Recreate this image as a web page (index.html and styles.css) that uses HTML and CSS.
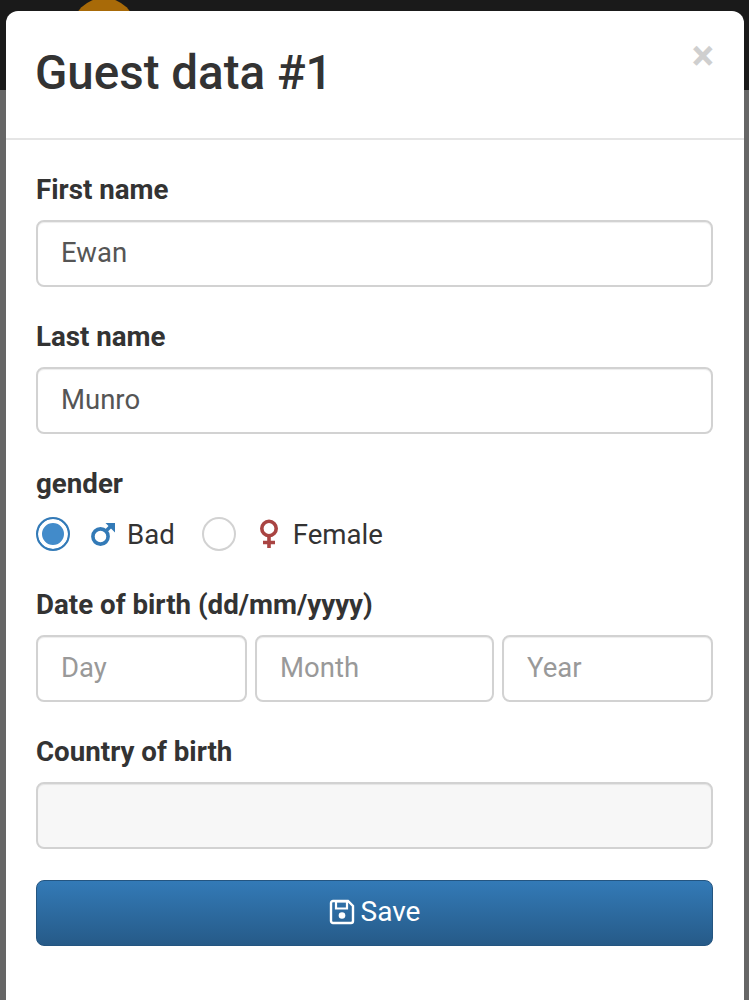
FILE: index.html
```html
<!DOCTYPE html>
<html>
<head>
<meta charset="utf-8" />
<title>Guest data</title>
<link rel="stylesheet" href="styles.css">
</head>
<body>
<div class="top_bar"><div class="top_logo"></div></div>

<div class="modal">
	<div class="modal_head">
		<h1>Guest data #1</h1>
		<span class="modal_close">×</span>
	</div>
	<form class="modal_body">
		<div class="field">
			<label>First name</label>
			<div class="input">Ewan</div>
		</div>
		<div class="field">
			<label>Last name</label>
			<div class="input">Munro</div>
		</div>
		<div class="field field_gender">
			<label>gender</label>
			<div class="gender_row">
				<span class="radio radio_on"></span>
				<svg class="icon_mars" width="26" height="26" viewBox="0 0 26 26"><circle cx="10.5" cy="15.5" r="7.6" fill="none" stroke="#337ab7" stroke-width="3.6"/><path d="M15.5 10.5 L22 4" stroke="#337ab7" stroke-width="3.6" fill="none"/><path d="M15.5 2 H25 V11.5 Z" fill="#337ab7"/></svg>
				<span class="gender_txt">Bad</span>
				<span class="radio"></span>
				<svg class="icon_venus" width="22" height="30" viewBox="0 0 22 30"><circle cx="11" cy="9.5" r="7.2" fill="none" stroke="#a94442" stroke-width="3.6"/><path d="M11 17 V29 M5 23.5 H17" stroke="#a94442" stroke-width="3.6" fill="none"/></svg>
				<span class="gender_txt">Female</span>
			</div>
		</div>
		<div class="field">
			<label>Date of birth (dd/mm/yyyy)</label>
			<div class="date_row">
				<div class="input input_empty">Day</div>
				<div class="input input_empty">Month</div>
				<div class="input input_empty">Year</div>
			</div>
		</div>
		<div class="field">
			<label>Country of birth</label>
			<div class="input input_disabled"></div>
		</div>
		<div class="btn_save">
			<svg width="26" height="26" viewBox="0 0 26 26"><path d="M4 2 H19 L24 7 V22 A2 2 0 0 1 22 24 H4 A2 2 0 0 1 2 22 V4 A2 2 0 0 1 4 2 Z" fill="none" stroke="#fff" stroke-width="2.4"/><path d="M7 2.5 H18 V9.5 H7 Z" fill="none" stroke="#fff" stroke-width="2.2"/><circle cx="13" cy="16.5" r="3.3" fill="#fff"/></svg>
			<span>Save</span>
		</div>
	</form>
</div>
</body>
</html>
```

FILE: styles.css
```css
html,body{
	margin:0;
	height:1000px;
	overflow:hidden;
}
body{
	position:relative;
	background-color:#666;
	font-family:Roboto, "Liberation Sans", sans-serif;
	color:#333;
}
.top_bar{
	position:absolute;
	left:0;
	top:0;
	width:100%;
	height:90px;
	background-color:#1a1a1a;
	overflow:hidden;
}
.top_logo{
	position:absolute;
	left:72px;
	top:-2px;
	width:64px;
	height:64px;
	border-radius:50%;
	background-color:#a86a08;
}
.modal{
	position:relative;
	margin:11px 5px 0 6px;
	height:989px;
	background-color:#fff;
	border-radius:12px 12px 0 0;
}
.modal_head{
	display:flex;
	justify-content:space-between;
	height:127px;
	padding:0 30px 0 29px;
	border-bottom:2px solid #e5e5e5;
}
.modal_head h1{
	margin:32px 0 0 0;
	font-size:47.5px;
	line-height:60px;
	font-weight:500;
}
.modal_close{
	margin:24px 0 0 0;
	font-size:42px;
	line-height:42px;
	font-weight:700;
	color:#cfcfcf;
}
.modal_body{
	display:block;
	padding:31px 31px 0 30px;
}
.field{
	margin-bottom:31px;
}
.field label{
	display:block;
	height:49px;
	font-size:27.7px;
	line-height:38px;
	font-weight:700;
}
.field_gender{
	margin-bottom:29px;
}
.field_gender label{
	height:46px;
}
.input{
	box-sizing:border-box;
	height:67px;
	padding:0 23px;
	border:2px solid #d2d2d2;
	border-radius:8px;
	background-color:#fff;
	box-shadow:inset 0 1px 1px rgba(0,0,0,.075);
	font-size:27.5px;
	line-height:61px;
	color:#555;
}
.input_empty{
	color:#999;
}
.input_disabled{
	background-color:#f7f7f7;
}
.date_row{
	display:grid;
	grid-template-columns:211px 239px 211px;
	gap:8px;
}
.gender_row{
	display:flex;
	align-items:center;
	height:46px;
	font-size:27.6px;
}
.radio{
	box-sizing:border-box;
	width:34px;
	height:34px;
	border:2px solid #d2d2d2;
	border-radius:50%;
	background-color:#fff;
}
.radio_on{
	border-color:#337ab7;
	background-color:#428bca;
	box-shadow:inset 0 0 0 4px #fff;
}
.icon_mars{
	margin-left:20px;
}
.icon_venus{
	margin-left:22px;
	margin-right:2px;
}
.gender_txt{
	margin-left:11px;
	margin-right:27px;
}
.btn_save{
	box-sizing:border-box;
	display:flex;
	align-items:center;
	justify-content:center;
	gap:6px;
	height:66px;
	margin-top:30px;
	padding-bottom:3px;
	border:1px solid #245580;
	border-radius:8px;
	background-image:linear-gradient(to bottom,#337ab7,#265a88);
	color:#fff;
	font-size:28px;
}
```
